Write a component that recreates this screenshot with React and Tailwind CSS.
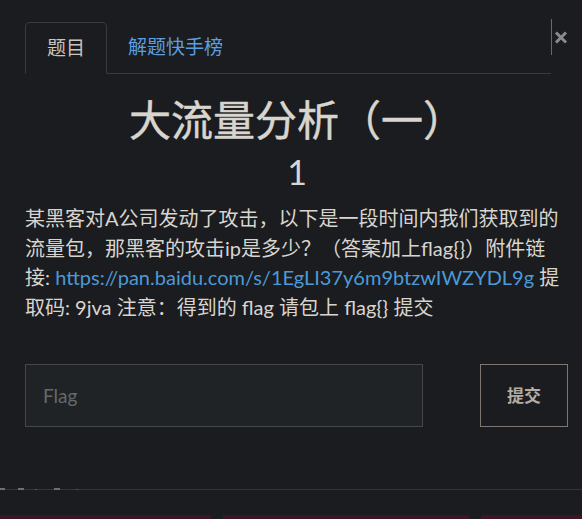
export default function App() {
  return (
    <div
      className="relative min-h-[519px] w-full overflow-hidden bg-[#1b1c1f] text-[#d8d5cf]"
      style={{ fontFamily: 'Lato, "Noto Sans CJK SC", sans-serif' }}
    >
      <div className="pl-[25px] pr-[13px] pt-[19px]">
        {/* Tabs + close */}
        <div className="flex items-start">
          <ul className="mt-[3px] flex flex-1 border-b border-[#3a3b3e]">
            <li className="-mb-px rounded-t-[5px] border border-b-transparent border-[#3a3b3e] bg-[#1b1c1f] px-[21px] text-[19px] leading-[50px] text-[#c9c5bd]">
              题目
            </li>
            <li className="px-[21px] text-[19px] leading-[50px] text-[#5a9fe0]">解题快手榜</li>
          </ul>
          <button className="flex h-[36px] w-[18px] items-center border-l border-[#6a6a6a] pl-[2px]">
            <svg width="14" height="13" viewBox="0 0 14 13">
              <path d="M2 1.5 L12 11.5 M12 1.5 L2 11.5" stroke="#8a8a8a" strokeWidth="3" />
            </svg>
          </button>
        </div>

        {/* Title */}
        <div className="mt-[20px] text-center">
          <h1 className="text-[42px] font-normal leading-[52px] [-webkit-text-stroke:0.5px_#d8d5cf]">大流量分析（一）</h1>
          <p className="mt-[6px] text-[34px] leading-[40px]">1</p>
        </div>

        {/* Description */}
        <p className="mt-[12px] text-[20px] leading-[29.5px]">
          某黑客对A公司发动了攻击，以下是一段时间内我们获取到的流量包，那黑客的攻击ip是多少？（答案加上flag{'{}'}）附件链接:{' '}
          <a className="text-[#4b9ad8]">https://pan.baidu.com/s/1EgLI37y6m9btzwIWZYDL9g</a> 提取码: 9jva 注意：得到的 flag 请包上 flag{'{}'} 提交
        </p>

        {/* Flag form */}
        <div className="mt-[42px] flex items-stretch">
          <input
            placeholder="Flag"
            className="h-[63px] w-[398px] border border-[#45474a] bg-[#1f2326] px-[17px] text-[19px] text-[#d8d5cf] placeholder:text-[#686868] focus:outline-none"
          />
          <button className="ml-auto mr-[1px] h-[63px] w-[88px] border border-[#7e766f] text-[17px] font-bold text-[#b3aca4]">
            提交
          </button>
        </div>
      </div>

      {/* Footer divider */}
      <div className="relative mt-[62px] h-px bg-[#34363a]">
        <div className="absolute left-0 top-[-1px] flex items-center">
          <span className="h-[2px] w-[5px] bg-[#6e6e6e]" />
          <span className="ml-[13px] h-[2px] w-[6px] bg-[#6e6e6e]" />
          <span className="ml-[11px] h-[1px] w-[2px] bg-[#555]" />
          <span className="ml-[17px] h-[2px] w-[6px] bg-[#6e6e6e]" />
          <span className="ml-[16px] h-[1px] w-[2px] bg-[#555]" />
        </div>
      </div>

      {/* Bottom strip */}
      <div className="absolute bottom-0 left-0 flex h-[4px] w-full">
        <div className="w-[211px] bg-[#3c1623]" />
        <div className="w-[12px]" />
        <div className="w-[246px] bg-[#3c1623]" />
        <div className="w-[12px]" />
        <div className="flex-1 bg-[#3c1623]" />
      </div>
    </div>
  )
}
